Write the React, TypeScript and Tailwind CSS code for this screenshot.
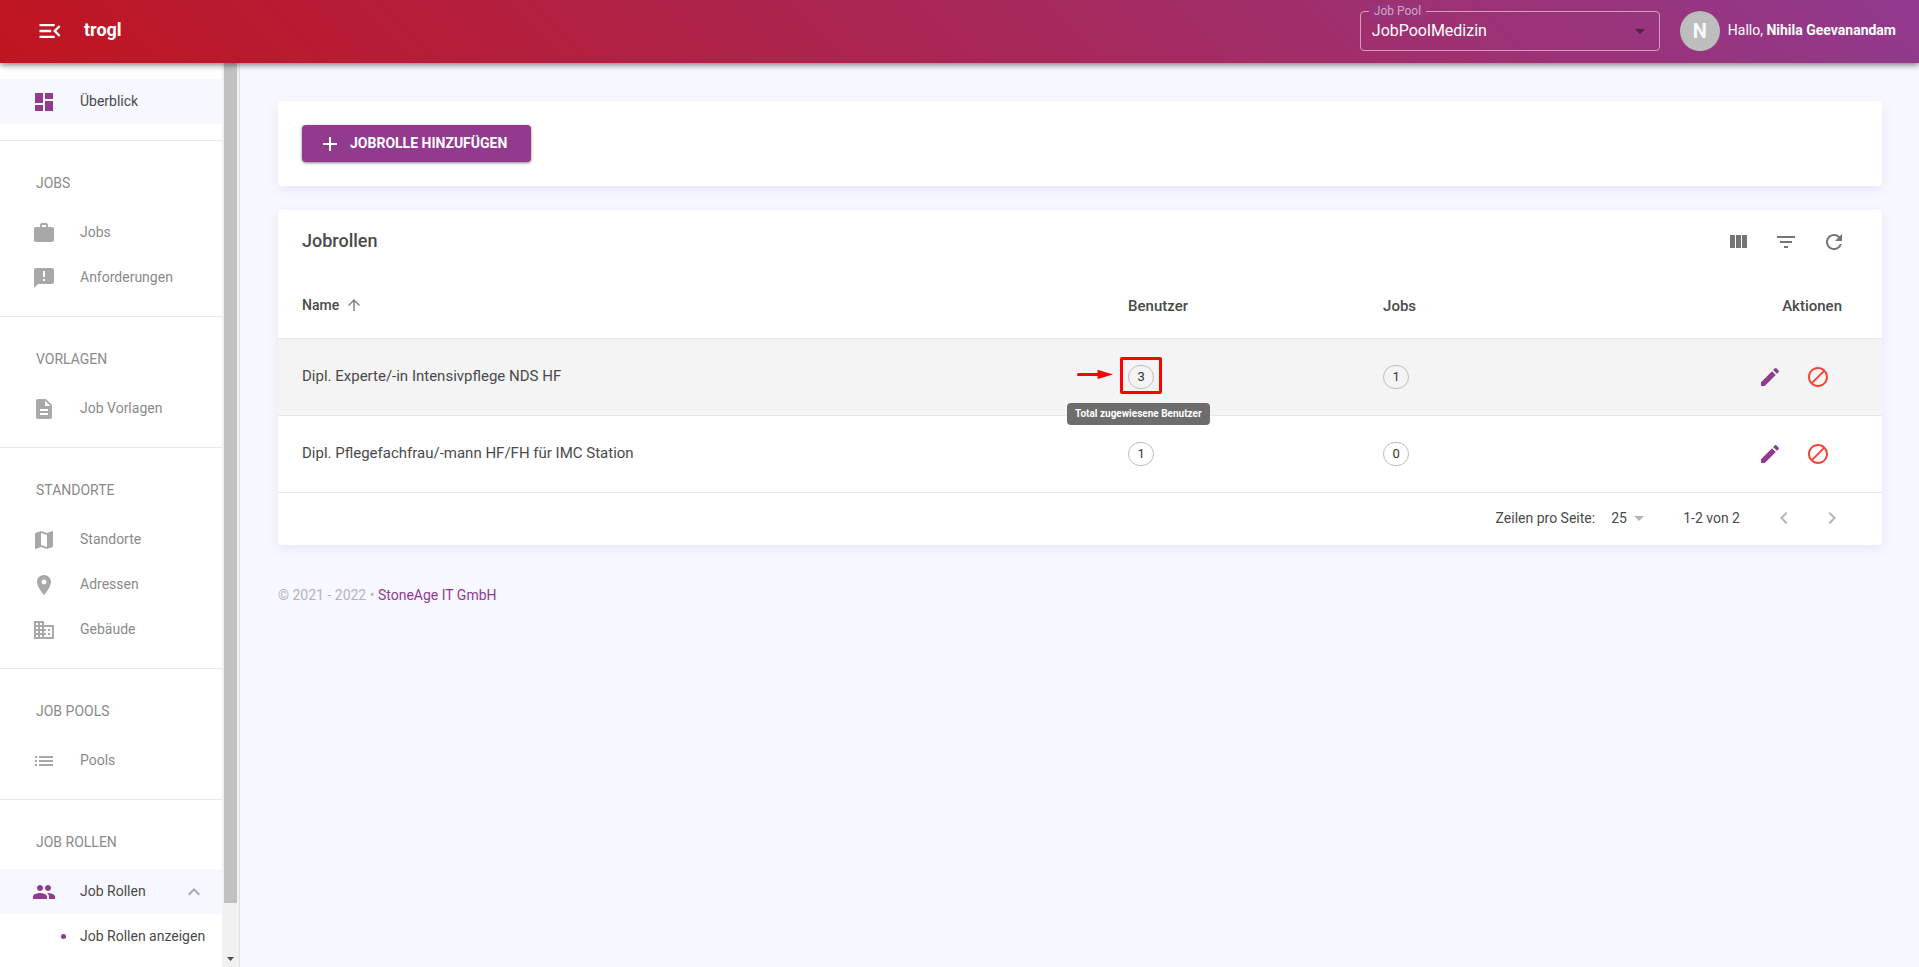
import React, { useState } from 'react';
import {
  MdAdd,
  MdAnnouncement,
  MdArrowDropDown,
  MdArrowUpward,
  MdBlock,
  MdBusiness,
  MdChevronLeft,
  MdChevronRight,
  MdDashboard,
  MdDescription,
  MdEdit,
  MdExpandLess,
  MdFilterList,
  MdList,
  MdMap,
  MdMenuOpen,
  MdPeople,
  MdPlace,
  MdRefresh,
  MdWork,
} from 'react-icons/md';

const sections = [
  {
    title: 'Jobs',
    items: [
      { label: 'Jobs', icon: MdWork },
      { label: 'Anforderungen', icon: MdAnnouncement },
    ],
  },
  { title: 'Vorlagen', items: [{ label: 'Job Vorlagen', icon: MdDescription }] },
  {
    title: 'Standorte',
    items: [
      { label: 'Standorte', icon: MdMap },
      { label: 'Adressen', icon: MdPlace },
      { label: 'Gebäude', icon: MdBusiness },
    ],
  },
  { title: 'Job Pools', items: [{ label: 'Pools', icon: MdList }] },
];

const roles = [
  { name: 'Dipl. Experte/-in Intensivpflege NDS HF', users: 3, jobs: 1, active: true },
  { name: 'Dipl. Pflegefachfrau/-mann HF/FH für IMC Station', users: 1, jobs: 0, active: false },
];

function SectionTitle({ children }: { children: React.ReactNode }) {
  return (
    <h2 className="flex h-[69px] items-center pt-3.5 pl-9 text-sm uppercase text-[#8a8a8a]">{children}</h2>
  );
}

function Badge({ value }: { value: number }) {
  return (
    <span className="flex h-6 w-[26px] items-center justify-center rounded-full border border-[#bdbdbd] text-[13px] text-[#333]">
      {value}
    </span>
  );
}

function Header() {
  const [pool, setPool] = useState('JobPoolMedizin');

  return (
    <header className="relative z-10 flex h-[63px] shrink-0 items-center bg-[linear-gradient(45deg,#c0151f,#913a8e)] pr-[23px] pb-0.5 pl-9 text-white shadow-[0_2px_6px_rgba(0,0,0,0.5)]">
      <button aria-label="Menü" className="cursor-pointer">
        <MdMenuOpen className="size-7" />
      </button>
      <h1 className="ml-5 pb-0.5 text-lg font-bold">trogl</h1>

      <div className="relative ml-auto w-[300px]">
        <label htmlFor="pool" className="absolute -top-2 left-[9px] bg-[#98357a] px-[5px] text-xs leading-4 text-[#d3a3c6]">
          Job Pool
        </label>
        <select
          id="pool"
          value={pool}
          onChange={(e) => setPool(e.target.value)}
          className="h-10 w-full appearance-none rounded border border-[#d59cc0] bg-transparent px-[11px] text-base text-white outline-none"
        >
          <option>JobPoolMedizin</option>
        </select>
        <MdArrowDropDown className="pointer-events-none absolute top-2 right-2 size-6 text-[#4f1d45]" />
      </div>

      <div className="ml-5 flex size-10 items-center justify-center rounded-full bg-[#bdbdbd] text-xl font-bold text-[#f7f7ff]">
        N
      </div>
      <p className="ml-2 pb-0.5 text-sm">
        Hallo, <b className="font-bold">Nihila Geevanandam</b>
      </p>
    </header>
  );
}

function Sidebar() {
  return (
    <aside className="flex w-60 shrink-0 border-r border-[#e0e0e0] bg-white">
      <nav className="flex-1 pt-4 text-sm text-[#8a8a8a]">
        <a href="#" className="flex h-[45px] items-center bg-[#f7f7ff] pl-8 text-[#4a4a4a]">
          <MdDashboard className="mr-6 size-6 text-[#913a8e]" />
          <span className="pb-0.5">Überblick</span>
        </a>
        <hr className="mt-4 border-[#e8e8e8]" />

        {sections.map((section) => (
          <div key={section.title} className="border-b border-[#e8e8e8] pb-4">
            <SectionTitle>{section.title}</SectionTitle>
            {section.items.map((item) => (
              <a key={item.label} href="#" className="flex h-[45px] items-center pl-8">
                <item.icon className="mr-6 size-6 text-[#a8a8a8]" />
                <span className="pb-0.5">{item.label}</span>
              </a>
            ))}
          </div>
        ))}

        <SectionTitle>Job Rollen</SectionTitle>
        <a href="#" className="flex h-[45px] items-center bg-[#f7f7ff] pr-4 pl-8 text-[#4a4a4a]">
          <MdPeople className="mr-6 size-6 text-[#913a8e]" />
          <span className="pb-0.5">Job Rollen</span>
          <MdExpandLess className="ml-auto size-6 text-[#a8a8a8]" />
        </a>
        <a href="#" className="flex h-[45px] items-center pl-[61px] text-[#4a4a4a]">
          <span className="mr-3.5 size-[5px] rounded-full bg-[#913a8e]" />
          <span className="pb-0.5">Job Rollen anzeigen</span>
        </a>
      </nav>

      {/* Scrollbar */}
      <div className="flex w-[17px] flex-col items-center bg-[#f1f1f1]">
        <div className="w-[13px] flex-1 bg-[#c1c1c1]" />
        <div className="flex h-16 items-end pb-1.5">
          <svg className="h-1 w-[7px]" viewBox="0 0 7 4">
            <path d="M0 0h7L3.5 4z" fill="#505050" />
          </svg>
        </div>
      </div>
    </aside>
  );
}

function RoleTable() {
  return (
    <table className="w-full table-fixed text-left text-[15px] text-[#4a4a4a]">
      <thead>
        <tr className="h-16 border-b border-[#ebebeb]">
          <th className="w-[52%] pl-6 text-sm font-medium">
            <button className="flex items-center gap-1.5 pb-0.5 font-medium">
              Name
              <MdArrowUpward className="size-[18px] text-[#808080]" />
            </button>
          </th>
          <th className="w-[255px] pl-4 font-medium">Benutzer</th>
          <th className="pl-4 font-medium">Jobs</th>
          <th className="pr-10 text-right font-medium">Aktionen</th>
        </tr>
      </thead>
      <tbody>
        {roles.map((role) => (
          <tr key={role.name} className={role.active ? 'h-[77px] border-b border-[#e6e6e6] bg-[#f4f4f4]' : 'h-[77px] border-b border-[#e6e6e6]'}>
            <td className="pl-6">{role.name}</td>
            <td className="pl-4">
              <div className="relative w-[26px]">
                <Badge value={role.users} />
                {role.active && (
                  <>
                    <svg className="absolute top-1 -left-[51px] h-[11px] w-9" viewBox="0 0 36 11">
                      <path d="M1.5 5.5H22" stroke="#f00" strokeWidth="3" strokeLinecap="round" />
                      <path d="M20.5 .8L36 5.5L20.5 10z" fill="#f00" />
                    </svg>
                    <div className="absolute -top-2 -left-2 h-[37px] w-[42px] rounded-xs border-3 border-[#f00]" />
                    <div
                      role="tooltip"
                      className="absolute top-[38px] -left-[61px] z-10 flex h-[22px] items-center rounded bg-[#6d6d6d] px-2 text-[10px] font-bold whitespace-nowrap text-white"
                    >
                      Total zugewiesene Benutzer
                    </div>
                  </>
                )}
              </div>
            </td>
            <td className="pl-4">
              <Badge value={role.jobs} />
            </td>
            <td className="pr-10">
              <div className="flex justify-end">
                <button aria-label="Bearbeiten" className="p-3 text-[#913a8e]">
                  <MdEdit className="size-6" />
                </button>
                <button aria-label="Deaktivieren" className="p-3 text-[#f44336]">
                  <MdBlock className="size-6" />
                </button>
              </div>
            </td>
          </tr>
        ))}
      </tbody>
    </table>
  );
}

function Pagination() {
  const [rows, setRows] = useState('25');

  return (
    <div className="flex h-[52px] items-center justify-end pr-[26px] pb-0.5 text-sm text-[#4a4a4a]">
      <label htmlFor="rows">Zeilen pro Seite:</label>
      <div className="relative ml-4 flex items-center">
        <select
          id="rows"
          value={rows}
          onChange={(e) => setRows(e.target.value)}
          className="w-10 appearance-none bg-transparent outline-none"
        >
          <option>25</option>
          <option>50</option>
        </select>
        <MdArrowDropDown className="pointer-events-none absolute right-0 size-6 text-[#b5b5b5]" />
      </div>
      <span className="mr-5 ml-8">1-2 von 2</span>
      <button aria-label="Vorherige Seite" className="p-3 text-[#b5b5b5]">
        <MdChevronLeft className="size-6" />
      </button>
      <button aria-label="Nächste Seite" className="p-3 text-[#b5b5b5]">
        <MdChevronRight className="size-6" />
      </button>
    </div>
  );
}

export default function App() {
  return (
    <div className="flex min-h-screen flex-col bg-[#f7f7ff] font-[Roboto,sans-serif]">
      <Header />
      <div className="flex flex-1">
        <Sidebar />

        <main className="flex-1 pt-[38px] pr-[37px] pl-[38px]">
          <div className="rounded bg-white p-6 shadow-[0_4px_12px_rgba(110,120,220,0.12)]">
            <button className="flex h-[37px] items-center gap-2 rounded bg-[#913a8e] pr-6 pl-4 text-sm font-bold text-white uppercase shadow-[0_1px_3px_rgba(0,0,0,0.5)]">
              <MdAdd className="size-6" />
              <span className="pb-0.5">Jobrolle hinzufügen</span>
            </button>
          </div>

          <div className="mt-6 rounded bg-white shadow-[0_4px_12px_rgba(110,120,220,0.12)]">
            <div className="flex h-16 items-center pr-6 pl-6">
              <h2 className="pb-0.5 text-lg font-medium text-[#4a4a4a]">Jobrollen</h2>
              <div className="ml-auto flex text-[#757575]">
                <button aria-label="Spalten" className="p-3">
                  <svg className="size-6" viewBox="0 0 24 24" fill="currentColor">
                    <path d="M10 18h5V5h-5v13zm-6 0h5V5H4v13zM16 5v13h5V5h-5z" />
                  </svg>
                </button>
                <button aria-label="Filter" className="p-3">
                  <MdFilterList className="size-6" />
                </button>
                <button aria-label="Aktualisieren" className="p-3">
                  <MdRefresh className="size-6" />
                </button>
              </div>
            </div>
            <RoleTable />
            <Pagination />
          </div>

          <footer className="pt-10 text-sm text-[#b4b4b8]">
            © 2021 - 2022 •{' '}
            <a href="#" className="text-[#913a8e]">
              StoneAge IT GmbH
            </a>
          </footer>
        </main>
      </div>
    </div>
  );
}
